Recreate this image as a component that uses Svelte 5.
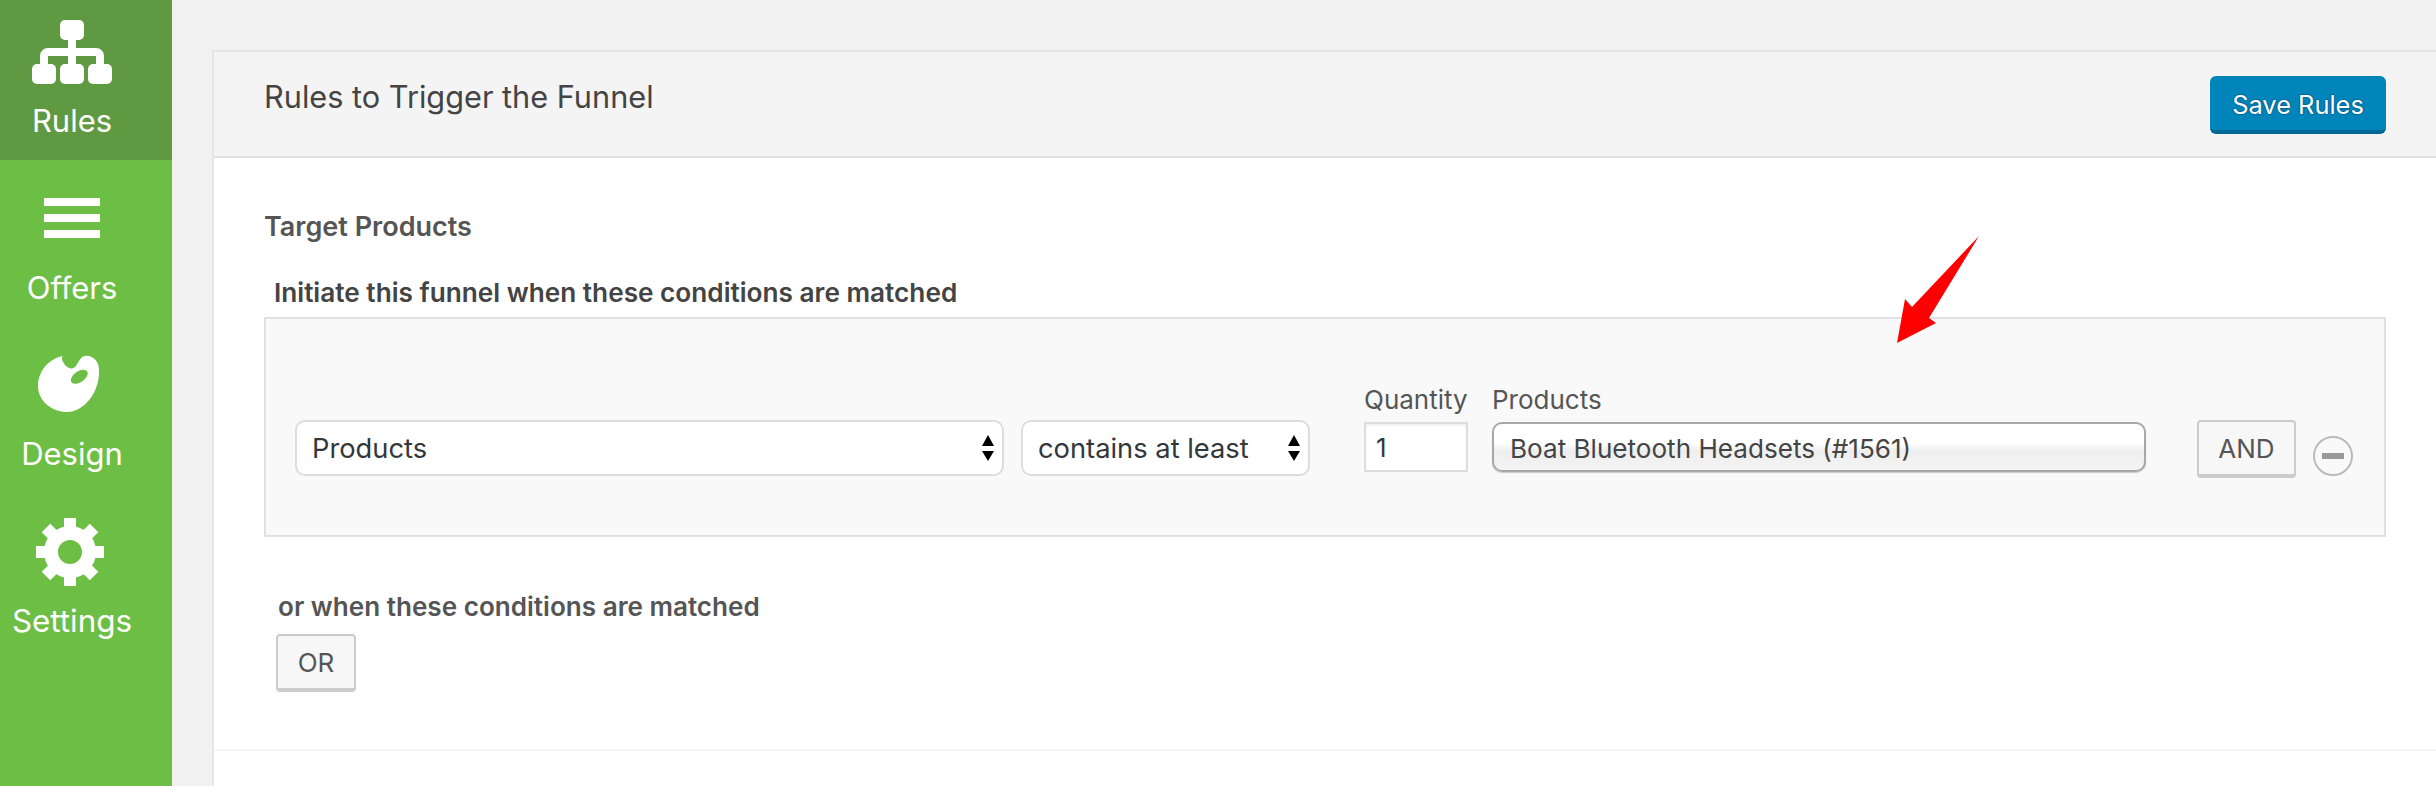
<script>
    const teeth = [0, 45, 90, 135, 180, 225, 270, 315];
</script>

<div class="page">
    <nav class="sidebar">
        <div class="nav-item active">
            <svg class="icon" width="80" height="64" viewBox="0 0 80 64">
                <rect x="28" y="0" width="24" height="20" rx="5" />
                <rect x="0" y="44" width="24" height="20" rx="5" />
                <rect x="28" y="44" width="24" height="20" rx="5" />
                <rect x="56" y="44" width="24" height="20" rx="5" />
                <path class="line" d="M40 18V46M12 46V36a4 4 0 0 1 4-4H64a4 4 0 0 1 4 4V46" />
            </svg>
            <span>Rules</span>
        </div>
        <div class="nav-item offers">
            <div class="bars"><i></i><i></i><i></i></div>
            <span>Offers</span>
        </div>
        <div class="nav-item design">
            <svg class="icon" width="62" height="58" viewBox="0 0 62 58">
                <path
                    fill-rule="evenodd"
                    d="M25 1C22 3 26 9 28 11C31 14 35 14 37 12C40 9 41 4 45 1.500C50 -0.500 57 2 60 9C62 15 61 26 58 33C54 44 43 57 29 57C15 57 0 47 0 31C0 18 9 4 25 1ZM33.500 27.200a9.500 5.500 -35 1 0 15.600 -10.900a9.500 5.500 -35 1 0 -15.600 10.900Z"
                />
            </svg>
            <span>Design</span>
        </div>
        <div class="nav-item settings">
            <svg class="icon" width="68" height="68" viewBox="-34 -34 68 68">
                {#each teeth as a}
                    <rect x="-6" y="-34" width="12" height="14" transform="rotate({a})" />
                {/each}
                <circle class="ring" r="19" />
            </svg>
            <span>Settings</span>
        </div>
    </nav>

    <main class="main">
        <section class="card">
            <header class="card-head">
                <h2>Rules to Trigger the Funnel</h2>
                <button class="save">Save Rules</button>
            </header>
            <div class="card-body">
                <h3>Target Products</h3>
                <div class="group-title">Initiate this funnel when these conditions are matched</div>
                <div class="panel">
                    <div class="row">
                        <div class="select wide">
                            <span>Products</span>
                            <svg width="14" height="26" viewBox="0 0 14 26"><path d="M7 0L13 11H1ZM7 26L1 16H13Z" /></svg>
                        </div>
                        <div class="select narrow">
                            <span>contains at least</span>
                            <svg width="14" height="26" viewBox="0 0 14 26"><path d="M7 0L13 11H1ZM7 26L1 16H13Z" /></svg>
                        </div>
                        <div class="field qty">
                            <label for="qty">Quantity</label>
                            <input id="qty" value="1" />
                        </div>
                        <div class="field products">
                            <span class="label">Products</span>
                            <div class="token">Boat Bluetooth Headsets (#1561)</div>
                        </div>
                        <button class="btn and">AND</button>
                        <div class="minus"><i></i></div>
                    </div>
                </div>
                <div class="or-title">or when these conditions are matched</div>
                <button class="btn or">OR</button>
            </div>
        </section>
    </main>

    <svg class="arrow" width="90" height="112" viewBox="0 0 90 112">
        <path d="M82 0L32 82L39 87L0 107L8 63L15 71Z" />
    </svg>
</div>

<style>
    :global(body) {
        background: #f1f1f1;
        overflow: hidden;
    }
    .page {
        position: relative;
        display: flex;
        width: 2436px;
        height: 786px;
        overflow: hidden;
        font-family: Inter, "Liberation Sans", sans-serif;
        color: #444;
    }
    .sidebar {
        width: 172px;
        flex: none;
        box-sizing: border-box;
        background: #6dbe45;
        color: #fff;
        font-size: 31px;
        text-align: center;
    }
    .nav-item {
        display: flex;
        flex-direction: column;
        align-items: center;
        box-sizing: border-box;
        height: 166px;
        padding-right: 28px;
        line-height: 36px;
    }
    .nav-item span {
        display: block;
    }
    .icon {
        display: block;
        fill: #fff;
    }
    .active {
        height: 160px;
        padding-top: 20px;
        background: #5f9a43;
    }
    .active span {
        margin-top: 19px;
    }
    .line {
        fill: none;
        stroke: #fff;
        stroke-width: 8;
    }
    .offers {
        padding-top: 38px;
    }
    .offers span {
        margin-top: 32px;
    }
    .bars {
        display: flex;
        flex-direction: column;
        gap: 8px;
        width: 56px;
    }
    .bars i {
        display: block;
        height: 8px;
        background: #fff;
    }
    .design {
        padding-top: 29px;
    }
    .design .icon {
        margin-left: -6px;
    }
    .design span {
        margin-top: 23px;
    }
    .settings {
        padding-top: 26px;
    }
    .settings .icon {
        margin-left: -4px;
    }
    .settings span {
        margin-top: 17px;
        font-size: 31.4px;
    }
    .ring {
        fill: none;
        stroke: #fff;
        stroke-width: 14;
    }
    .main {
        flex: 1;
        padding: 50px 0 0 40px;
    }
    .card {
        height: 100%;
        background: #fff;
        border-top: 2px solid #e5e5e5;
        border-left: 2px solid #e5e5e5;
    }
    .card-head {
        display: flex;
        justify-content: space-between;
        height: 104px;
        padding: 0 50px;
        background: #f4f4f4;
        border-bottom: 2px solid #e0e0e0;
    }
    h2 {
        margin: 0;
        padding-top: 26px;
        font-size: 30.7px;
        line-height: 38px;
        font-weight: 400;
        color: #444;
    }
    .save {
        width: 176px;
        height: 58px;
        margin-top: 24px;
        padding: 2px 0 0;
        font: inherit;
        font-size: 25.400px;
        color: #fff;
        background: #0085ba;
        border: 0;
        border-bottom: 4px solid #006799;
        border-radius: 6px;
        text-shadow: 0 -1px 1px #006799, 1px 0 1px #006799, 0 1px 1px #006799, -1px 0 1px #006799;
    }
    .card-body {
        height: 593px;
        box-sizing: border-box;
        padding: 0 50px;
        border-bottom: 2px solid #f5f5f5;
    }
    h3 {
        margin: 0;
        padding-top: 52px;
        font-size: 27px;
        line-height: 34px;
        font-weight: 600;
        color: #555;
    }
    .group-title {
        margin: 32px 0 0 10px;
        font-size: 26.200px;
        line-height: 34px;
        font-weight: 600;
        color: #444;
    }
    .panel {
        margin-top: 7px;
        height: 220px;
        box-sizing: border-box;
        border: 2px solid #e0e0e0;
        background: #f9f9f9;
        padding: 0 29px;
    }
    .row {
        display: flex;
        align-items: flex-end;
        margin-top: 65px;
    }
    .select {
        display: flex;
        align-items: center;
        justify-content: space-between;
        box-sizing: border-box;
        height: 56px;
        margin-bottom: 2px;
        padding: 0 7px 0 15px;
        font-size: 27.300px;
        color: #32373c;
        background: #fff;
        border: 2px solid #ddd;
        border-radius: 10px;
    }
    .wide {
        width: 709px;
    }
    .narrow {
        width: 289px;
        margin-left: 17px;
    }
    .field {
        display: flex;
        flex-direction: column;
        margin-bottom: 6px;
        font-size: 26px;
        color: #555;
    }
    .field label,
    .label {
        line-height: 32px;
        margin-bottom: 6px;
    }
    .qty {
        width: 104px;
        margin-left: 54px;
    }
    .qty input {
        box-sizing: border-box;
        width: 104px;
        height: 50px;
        padding: 0 10px;
        font: inherit;
        font-size: 26px;
        color: #32373c;
        background: #fff;
        border: 2px solid #ddd;
        box-shadow: inset 0 2px 2px rgba(0, 0, 0, 0.05);
    }
    .products {
        width: 654px;
        margin-left: 24px;
    }
    .token {
        box-sizing: border-box;
        height: 50px;
        padding: 0 16px;
        font-size: 26.100px;
        line-height: 49px;
        color: #444;
        border: 2px solid #a8a8a8;
        border-radius: 10px;
        background: linear-gradient(#fff 0, #fff 42%, #eee 58%, #f4f4f4 100%);
        box-shadow: 0 1px 1px rgba(0, 0, 0, 0.2);
    }
    .btn {
        box-sizing: border-box;
        font: inherit;
        font-size: 26px;
        color: #555;
        background: #f7f7f7;
        border: 2px solid #ccc;
        border-bottom-width: 4px;
        border-radius: 4px;
        padding: 1px 0 0;
    }
    .and {
        width: 99px;
        height: 58px;
        margin-left: 51px;
    }
    .minus {
        display: flex;
        align-items: center;
        justify-content: center;
        box-sizing: border-box;
        width: 40px;
        height: 40px;
        margin: 0 0 2px 17px;
        border: 2px solid #bbb;
        border-radius: 50%;
    }
    .minus i {
        display: block;
        width: 22px;
        height: 6px;
        background: #999;
    }
    .or-title {
        margin: 53px 0 0 14px;
        font-size: 26.100px;
        line-height: 34px;
        font-weight: 600;
        color: #555;
    }
    .or {
        display: block;
        width: 80px;
        height: 58px;
        margin: 10px 0 0 12px;
    }
    .arrow {
        position: absolute;
        left: 1897px;
        top: 236px;
        fill: #ff0000;
    }
</style>
